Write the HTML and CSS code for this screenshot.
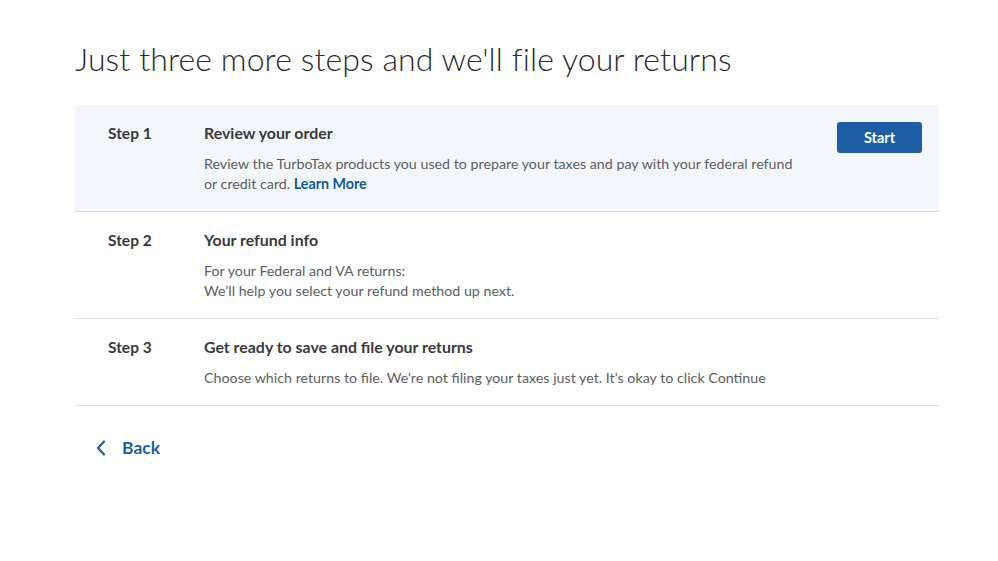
FILE: index.html
```html
<!DOCTYPE html>
<html>
<head>
<meta charset="utf-8">
<link rel="stylesheet" href="styles.css">
</head>
<body>
<div class="page">
  <h1 class="title">Just three more steps and we'll file your returns</h1>
  <div class="steps">
    <div class="step active">
      <div class="label">Step 1</div>
      <div class="body">
        <div class="heading">Review your order</div>
        <div class="desc">Review the TurboTax products you used to prepare your taxes and pay with your federal refund<br>or credit card. <a class="link" href="#">Learn More</a></div>
      </div>
      <div class="action"><button class="btn">Start</button></div>
    </div>
    <div class="step">
      <div class="label">Step 2</div>
      <div class="body">
        <div class="heading">Your refund info</div>
        <div class="desc">For your Federal and VA returns:<br>We’ll help you select your refund method up next.</div>
      </div>
    </div>
    <div class="step">
      <div class="label">Step 3</div>
      <div class="body">
        <div class="heading">Get ready to save and file your returns</div>
        <div class="desc">Choose which returns to file. We're not filing your taxes just yet. It's okay to click Continue</div>
      </div>
    </div>
  </div>
  <a class="back" href="#">
    <svg class="chev" width="10" height="16" viewBox="0 0 10 16"><path d="M8 1.5 L2 8 L8 14.5" fill="none" stroke="#1a5ea3" stroke-width="2.2" stroke-linecap="round" stroke-linejoin="round"/></svg>
    <span>Back</span>
  </a>
</div>
</body>
</html>
```
FILE: styles.css
```css
* { box-sizing: border-box; }
body {
  margin: 0;
  background: #fff;
  font-family: Lato, "Open Sans", sans-serif;
  color: #393a3d;
}
.page {
  width: 864px;
  margin-left: 75px;
  padding-top: 40px;
}
.title {
  margin: 0 0 27px 0;
  font-weight: 300;
  font-size: 32px;
  line-height: 38px;
  color: #2b2c2f;
  letter-spacing: 0.1px;
}
.steps { display: flex; flex-direction: column; }
.step {
  display: flex;
  align-items: flex-start;
  padding: 17px 17px 17px 33px;
  border-bottom: 1px solid #dcdee2;
}
.step.active { background: #f3f7fc; }
.label {
  width: 96px;
  flex: none;
  font-weight: 700;
  font-size: 15.5px;
  line-height: 22px;
  color: #393a3d;
}
.body { flex: 1; }
.heading {
  font-weight: 700;
  font-size: 15.9px;
  line-height: 22px;
  color: #393a3d;
}
.desc {
  margin-top: 10px;
  font-size: 14.25px;
  line-height: 20px;
  color: #5d5e63;
}
.link {
  color: #0f5a9c;
  font-weight: 700;
  text-decoration: none;
}
.action { flex: none; }
.btn {
  width: 85px;
  height: 31px;
  border: none;
  border-radius: 3px;
  background: #1c5fa6;
  color: #fff;
  font-family: Lato, "Open Sans", sans-serif;
  font-weight: 700;
  font-size: 14.5px;
  padding: 0;
}
.back {
  display: flex;
  align-items: center;
  gap: 16px;
  margin-top: 31px;
  margin-left: 21px;
  text-decoration: none;
  color: #1a5ea3;
  font-weight: 700;
  font-size: 17.5px;
  line-height: 22px;
}
```
